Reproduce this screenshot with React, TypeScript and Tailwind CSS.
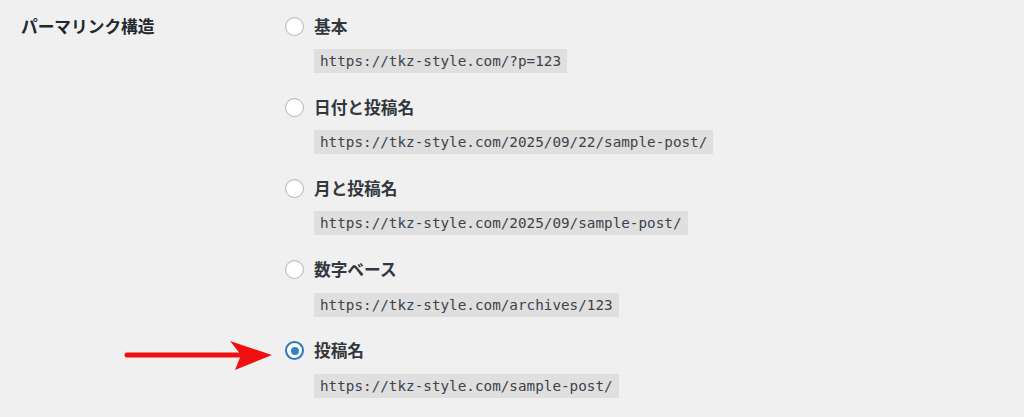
import React from "react";

const options = [
  { label: "基本", url: "https://tkz-style.com/?p=123", checked: false },
  { label: "日付と投稿名", url: "https://tkz-style.com/2025/09/22/sample-post/", checked: false },
  { label: "月と投稿名", url: "https://tkz-style.com/2025/09/sample-post/", checked: false },
  { label: "数字ベース", url: "https://tkz-style.com/archives/123", checked: false },
  { label: "投稿名", url: "https://tkz-style.com/sample-post/", checked: true },
];

function Radio({ checked }: { checked: boolean }) {
  return checked ? (
    <span className="flex h-[19px] w-[19px] shrink-0 items-center justify-center rounded-full border-2 border-[#2e78bd] bg-white">
      <span className="h-[8px] w-[8px] rounded-full bg-[#3582c4]" />
    </span>
  ) : (
    <span className="h-[19px] w-[19px] shrink-0 rounded-full border border-[#b4b6b9] bg-white shadow-[inset_0_1px_2px_rgba(0,0,0,0.08)]" />
  );
}

export default function App() {
  return (
    <div
      className="relative h-[417px] w-[1024px] overflow-hidden bg-[#f0f0f1] text-[#23282d]"
      style={{ fontFamily: '"Noto Sans CJK JP", "Noto Sans", sans-serif' }}
    >
      <div className="flex pt-[14px]">
        <div className="w-[285px] shrink-0 pl-[21px]">
          <div className="flex h-[24px] items-center text-[16.7px] font-bold leading-none">パーマリンク構造</div>
        </div>
        <div className="flex flex-col">
          {options.map((o) => (
            <div key={o.label} className="flex h-[81.2px] flex-col">
              <label className="flex h-[24px] items-center gap-[10px]">
                <Radio checked={o.checked} />
                <span className="text-[16.7px] font-bold leading-none text-[#32373c]">{o.label}</span>
              </label>
              <div className="mt-[9px] pl-[29px]">
                <code
                  className="inline-block h-[24px] bg-[#dfdfe0] px-[6px] text-[14.3px] leading-[24px] text-[#3c434a]"
                  style={{ fontFamily: '"DejaVu Sans Mono", "Liberation Mono", monospace' }}
                >
                  {o.url}
                </code>
              </div>
            </div>
          ))}
        </div>
      </div>
      <svg
        className="absolute left-[120px] top-[335px]"
        width="160"
        height="40"
        viewBox="120 335 160 40"
      >
        <line x1="127" y1="355" x2="245" y2="355" stroke="#f00f0f" strokeWidth="5" strokeLinecap="round" />
        <polygon points="230,341 272,355 235,370 241,355" fill="#f00f0f" />
      </svg>
    </div>
  );
}
